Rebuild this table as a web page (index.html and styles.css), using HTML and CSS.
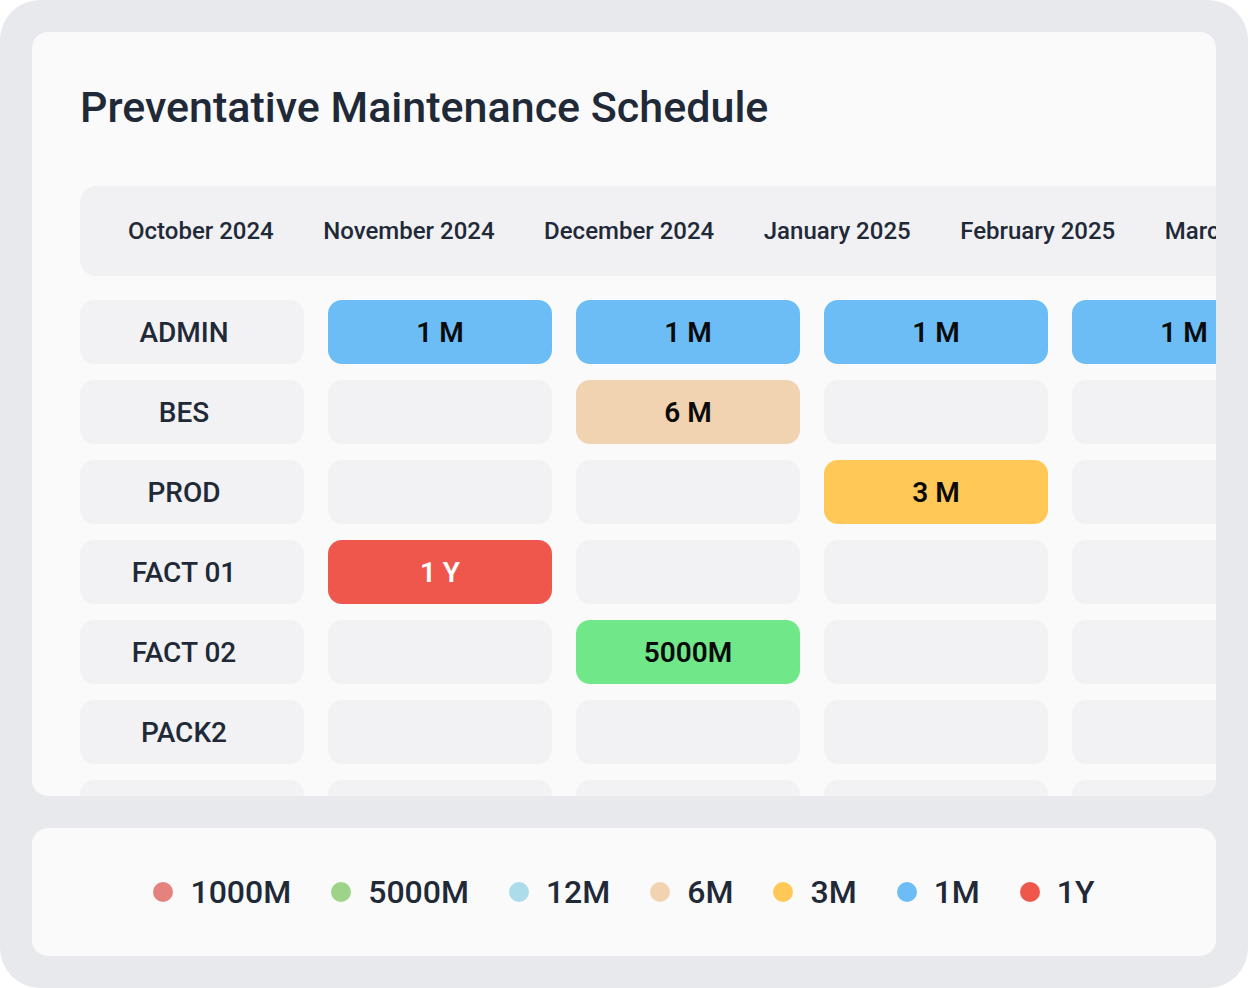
FILE: index.html
```html
<!DOCTYPE html>
<html lang="en">
<head>
<meta charset="utf-8">
<title>Preventative Maintenance Schedule</title>
<link rel="stylesheet" href="styles.css">
</head>
<body>
<div class="frame">
  <section class="card schedule">
    <h1 class="title">Preventative Maintenance Schedule</h1>
    <div class="months">
      <span class="month">October 2024</span>
      <span class="month">November 2024</span>
      <span class="month">December 2024</span>
      <span class="month">January 2025</span>
      <span class="month">February 2025</span>
      <span class="month">March 2025</span>
      <span class="month">April 2025</span>
    </div>
    <div class="rows">
      <div class="row">
        <div class="label">ADMIN</div>
        <div class="cell blue">1 M</div>
        <div class="cell blue">1 M</div>
        <div class="cell blue">1 M</div>
        <div class="cell blue">1 M</div>
        <div class="cell"></div>
      </div>
      <div class="row">
        <div class="label">BES</div>
        <div class="cell"></div>
        <div class="cell peach">6 M</div>
        <div class="cell"></div>
        <div class="cell"></div>
        <div class="cell"></div>
      </div>
      <div class="row">
        <div class="label">PROD</div>
        <div class="cell"></div>
        <div class="cell"></div>
        <div class="cell yellow">3 M</div>
        <div class="cell"></div>
        <div class="cell"></div>
      </div>
      <div class="row">
        <div class="label">FACT 01</div>
        <div class="cell red">1 Y</div>
        <div class="cell"></div>
        <div class="cell"></div>
        <div class="cell"></div>
        <div class="cell"></div>
      </div>
      <div class="row">
        <div class="label">FACT 02</div>
        <div class="cell"></div>
        <div class="cell green">5000M</div>
        <div class="cell"></div>
        <div class="cell"></div>
        <div class="cell"></div>
      </div>
      <div class="row">
        <div class="label">PACK2</div>
        <div class="cell"></div>
        <div class="cell"></div>
        <div class="cell"></div>
        <div class="cell"></div>
        <div class="cell"></div>
      </div>
      <div class="row">
        <div class="label"></div>
        <div class="cell"></div>
        <div class="cell"></div>
        <div class="cell"></div>
        <div class="cell"></div>
        <div class="cell"></div>
      </div>
    </div>
  </section>
  <section class="card legend">
    <div class="legend-item"><span class="dot d1000"></span><span class="legend-text">1000M</span></div>
    <div class="legend-item"><span class="dot d5000"></span><span class="legend-text">5000M</span></div>
    <div class="legend-item"><span class="dot d12"></span><span class="legend-text">12M</span></div>
    <div class="legend-item"><span class="dot d6"></span><span class="legend-text">6M</span></div>
    <div class="legend-item"><span class="dot d3"></span><span class="legend-text">3M</span></div>
    <div class="legend-item"><span class="dot d1"></span><span class="legend-text">1M</span></div>
    <div class="legend-item"><span class="dot d1y"></span><span class="legend-text">1Y</span></div>
  </section>
</div>
</body>
</html>
```
FILE: styles.css
```css
* { box-sizing: border-box; }

html, body {
  margin: 0;
  padding: 0;
  background: #ffffff;
}

body {
  font-family: Roboto, "Liberation Sans", sans-serif;
  color: #1f2937;
}

.frame {
  width: 1248px;
  height: 988px;
  background: #e8e9ec;
  border-radius: 40px;
  padding: 32px;
  display: flex;
  flex-direction: column;
  gap: 32px;
  overflow: hidden;
}

.card {
  background: #fafafa;
  border-radius: 16px;
  overflow: hidden;
}

.schedule {
  height: 764px;
  flex-shrink: 0;
  padding: 49px 0 0 48px;
}

.title {
  margin: 0;
  font-size: 43px;
  font-weight: 500;
  line-height: 52px;
  color: #1f2937;
  letter-spacing: 0;
  white-space: nowrap;
}

.months {
  margin-top: 53px;
  height: 90px;
  background: #f1f1f3;
  border-radius: 16px 0 0 16px;
  display: flex;
  align-items: center;
  gap: 49.5px;
  padding-left: 48px;
  white-space: nowrap;
  width: 1300px;
}

.month {
  flex-shrink: 0;
  font-size: 24px;
  font-weight: 500;
  color: #1f2937;
}

.rows {
  margin-top: 24px;
  display: flex;
  flex-direction: column;
  gap: 16px;
}

.row {
  display: flex;
  gap: 24px;
}

.label,
.cell {
  flex-shrink: 0;
  width: 224px;
  height: 64px;
  border-radius: 14px;
  background: #f2f2f4;
  display: flex;
  align-items: center;
  justify-content: center;
  font-size: 28px;
}

.label {
  color: #1f2937;
  padding-right: 16px;
  font-weight: 500;
}

.cell {
  color: #0b0b0b;
  font-weight: 600;
}

.blue { background: #6cbdf6; }
.peach { background: #f2d3b1; }
.yellow { background: #ffc857; }
.red { background: #ef574d; color: #ffffff; }
.green { background: #70e88a; }

.legend {
  height: 128px;
  flex-shrink: 0;
  display: flex;
  align-items: center;
  justify-content: center;
  gap: 40px;
}

.legend-item {
  display: flex;
  align-items: center;
  gap: 17px;
}

.dot {
  width: 20px;
  height: 20px;
  border-radius: 50%;
  flex-shrink: 0;
}

.legend-text {
  font-size: 32px;
  font-weight: 500;
  color: #1f2937;
}

.d1000 { background: #e5827e; }
.d5000 { background: #9dd48a; }
.d12 { background: #acdbea; }
.d6 { background: #f2d3b1; }
.d3 { background: #ffc857; }
.d1 { background: #6cbdf6; }
.d1y { background: #ef574d; }
```
